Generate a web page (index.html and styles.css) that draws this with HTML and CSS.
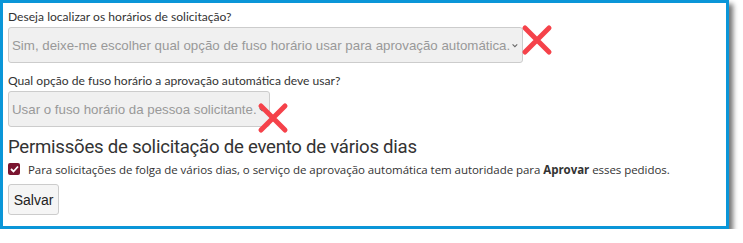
FILE: index.html
```html
<!DOCTYPE html>
<html lang="pt">
<head>
<meta charset="utf-8">
<link rel="stylesheet" href="styles.css">
</head>
<body>
<div class="frame">
  <div class="field">
    <label class="label">Deseja localizar os horários de solicitação?</label>
    <div class="select-row">
      <div class="select wide">
        <span class="select-text">Sim, deixe-me escolher qual opção de fuso horário usar para aprovação automática.</span>
        <svg class="chev" width="10" height="7" viewBox="0 0 10 7"><path d="M1 1.5 L5 5.5 L9 1.5" fill="none" stroke="#666" stroke-width="1.8"/></svg>
      </div>
      <svg class="xmark x1" width="34" height="34" viewBox="0 0 34 34"><path d="M5 5 L29 29 M29 5 L5 29" stroke="#f5424a" stroke-width="5" stroke-linecap="round"/></svg>
    </div>
  </div>
  <div class="field second">
    <label class="label">Qual opção de fuso horário a aprovação automática deve usar?</label>
    <div class="select-row">
      <div class="select narrow">
        <span class="select-text">Usar o fuso horário da pessoa solicitante.</span>
        <svg class="chev" width="10" height="7" viewBox="0 0 10 7"><path d="M1 1.5 L5 5.5 L9 1.5" fill="none" stroke="#666" stroke-width="1.8"/></svg>
      </div>
      <svg class="xmark x2" width="34" height="34" viewBox="0 0 34 34"><path d="M5 5 L29 29 M29 5 L5 29" stroke="#f5424a" stroke-width="5" stroke-linecap="round"/></svg>
    </div>
  </div>
  <h2 class="heading">Permissões de solicitação de evento de vários dias</h2>
  <div class="check-row">
    <span class="checkbox"><svg width="9" height="8" viewBox="0 0 9 8"><path d="M1 4 L3.5 6.5 L8 1.5" fill="none" stroke="#fff" stroke-width="1.8"/></svg></span>
    <span class="check-text">Para solicitações de folga de vários dias, o serviço de aprovação automática tem autoridade para <b>Aprovar</b> esses pedidos.</span>
  </div>
  <button class="btn">Salvar</button>
</div>
</body>
</html>
```
FILE: styles.css
```css
html, body {
  margin: 0;
  padding: 0;
  background: #fff;
}
.frame {
  box-sizing: border-box;
  width: 729px;
  height: 229px;
  border: 3px solid #0a96d8;
  background: #fff;
  box-shadow: 4px 4px 5px rgba(0, 0, 0, 0.55);
  padding: 5px 5px 0 5px;
  display: flex;
  flex-direction: column;
  align-items: flex-start;
  font-family: "Open Sans", "Noto Sans", sans-serif;
  color: #333;
}
.field {
  display: flex;
  flex-direction: column;
  align-items: flex-start;
}
.second {
  margin-top: 9px;
}
.label {
  font-family: Lato, "Open Sans", sans-serif;
  font-size: 12.1px;
  line-height: 18px;
  color: #333;
}
.select-row {
  display: flex;
  align-items: flex-start;
  position: relative;
  margin-top: 1px;
}
.select {
  box-sizing: border-box;
  height: 36px;
  border: 1px solid #ccc;
  border-radius: 3px;
  background: #f0f0f0;
  display: flex;
  align-items: center;
  padding: 0 4px 0 3px;
  font-family: "Liberation Sans", Arial, sans-serif;
  font-size: 13.3px;
  color: #999;
}
.wide { width: 515px; }
.narrow { width: 262px; }
.select-text {
  white-space: nowrap;
  flex: 1;
}
.chev {
  margin-left: 2px;
}
.xmark {
  position: absolute;
}
.x1 {
  left: 512px;
  top: -4px;
}
.x2 {
  left: 248px;
  top: 10px;
}
.heading {
  margin: 8px 0 0 0;
  font-family: Roboto, sans-serif;
  font-weight: 400;
  font-size: 18.6px;
  line-height: 24px;
  letter-spacing: -0.25px;
  color: #333;
}
.check-row {
  display: flex;
  align-items: center;
  margin-top: 1px;
  height: 18px;
}
.checkbox {
  box-sizing: border-box;
  width: 12px;
  height: 12px;
  border-radius: 2px;
  background: #7a1530;
  display: flex;
  align-items: center;
  justify-content: center;
  margin-right: 8px;
}
.check-text {
  font-size: 11.5px;
  color: #333;
  letter-spacing: -0.05px;
}
.check-text b {
  font-weight: 700;
}
.btn {
  margin-top: 6px;
  box-sizing: border-box;
  width: 51px;
  height: 31px;
  border: 1px solid #ccc;
  border-radius: 3px;
  background: #f5f5f5;
  font-family: "Liberation Sans", Arial, sans-serif;
  font-size: 14px;
  color: #222;
  padding: 0;
}
```
